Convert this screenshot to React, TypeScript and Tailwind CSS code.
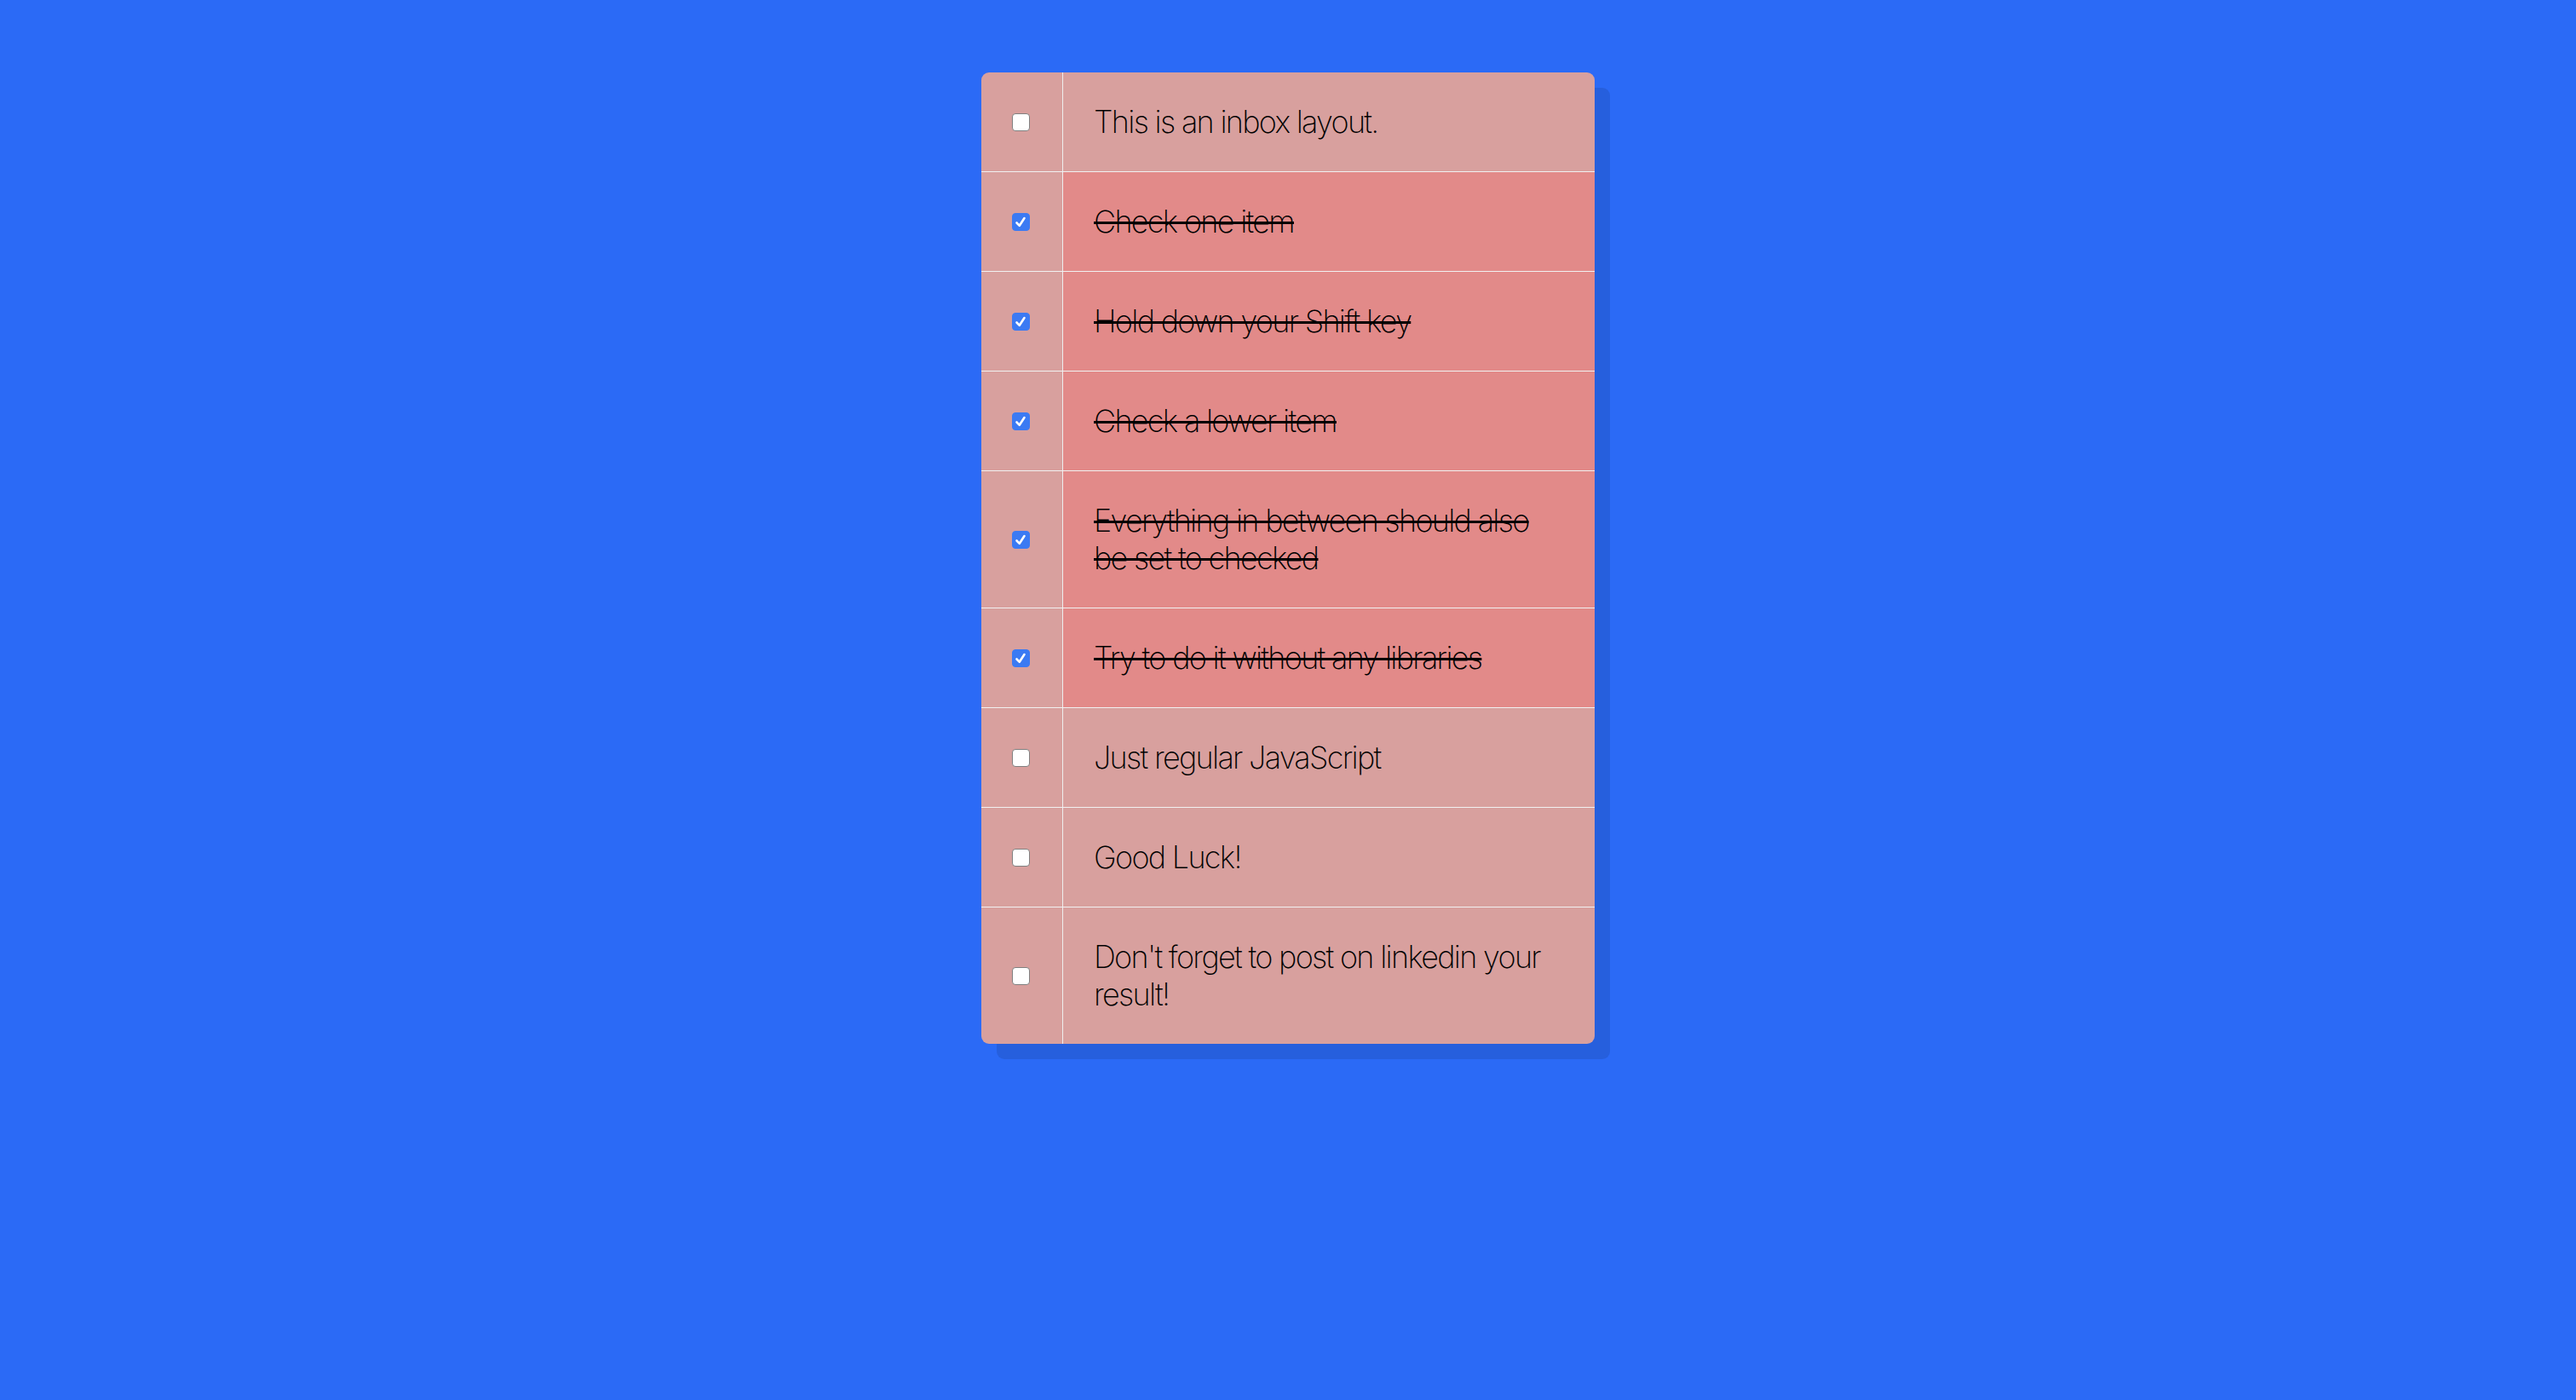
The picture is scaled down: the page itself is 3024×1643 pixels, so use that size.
import React, { useState } from "react";

const ITEMS: { text: string; checked: boolean }[] = [
  { text: "This is an inbox layout.", checked: false },
  { text: "Check one item", checked: true },
  { text: "Hold down your Shift key", checked: true },
  { text: "Check a lower item", checked: true },
  { text: "Everything in between should also be set to checked", checked: true },
  { text: "Try to do it without any libraries", checked: true },
  { text: "Just regular JavaScript", checked: false },
  { text: "Good Luck!", checked: false },
  { text: "Don't forget to post on linkedin your result!", checked: false },
];

export default function App() {
  const [items, setItems] = useState(ITEMS);
  const toggle = (i: number) =>
    setItems((prev) => prev.map((it, j) => (j === i ? { ...it, checked: !it.checked } : it)));

  return (
    <div className="min-h-[1643px] bg-[#2b6af6] pt-[85px]">
      <div className="mx-auto w-[720px] rounded-[9px] bg-[#d8a09e] shadow-[18px_18px_0_rgba(0,0,0,0.1)] overflow-hidden">
        {items.map((it, i) => (
          <label
            key={i}
            className="flex items-center border-b border-[#f1f1f1] last:border-b-0"
          >
            <span className="relative my-[36px] ml-[36px] mr-[38px] flex h-[21px] w-[21px] items-center justify-center">
              <input
                type="checkbox"
                checked={it.checked}
                onChange={() => toggle(i)}
                className="h-[21px] w-[21px] appearance-none rounded-[4px] border-[1.5px] border-[#808080] bg-white checked:border-[#3b7af3] checked:bg-[#3b7af3]"
              />
              {it.checked && (
                <svg
                  className="pointer-events-none absolute left-[2px] top-[2px]"
                  width="16"
                  height="17"
                  viewBox="0 0 16 17"
                >
                  <path
                    d="M3.5 9.5 L6.8 12.8 L12.5 4"
                    fill="none"
                    stroke="white"
                    strokeWidth="2.6"
                    strokeLinecap="round"
                    strokeLinejoin="round"
                  />
                </svg>
              )}
            </span>
            <p
              className={`m-0 flex-1 self-stretch border-l border-[#eeeeee] p-[36px] text-[36px] leading-[44px] font-extralight tracking-[-0.047em] text-black [font-family:Inter,'Liberation_Sans',sans-serif] ${
                it.checked ? "bg-[#e28a89] line-through decoration-[3px]" : ""
              }`}
            >
              {it.text}
            </p>
          </label>
        ))}
      </div>
    </div>
  );
}
